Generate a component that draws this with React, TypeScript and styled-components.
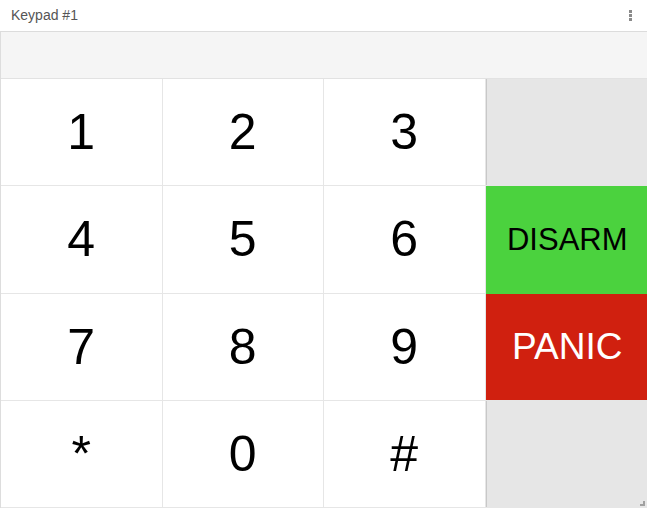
import styled, { createGlobalStyle } from "styled-components";

const GlobalStyle = createGlobalStyle`
    html, body {
        margin: 0;
        padding: 0;
        height: 100%;
        background: #ffffff;
        font-family: "Liberation Sans", Arial, sans-serif;
    }
    #root {
        height: 100%;
    }
`;

type Key = {
    label: string;
    kind: "digit" | "blank" | "disarm" | "panic";
};

const keys: Key[] = [
    { label: "1", kind: "digit" },
    { label: "2", kind: "digit" },
    { label: "3", kind: "digit" },
    { label: "", kind: "blank" },
    { label: "4", kind: "digit" },
    { label: "5", kind: "digit" },
    { label: "6", kind: "digit" },
    { label: "DISARM", kind: "disarm" },
    { label: "7", kind: "digit" },
    { label: "8", kind: "digit" },
    { label: "9", kind: "digit" },
    { label: "PANIC", kind: "panic" },
    { label: "*", kind: "digit" },
    { label: "0", kind: "digit" },
    { label: "#", kind: "digit" },
    { label: "", kind: "blank" },
];

const App = () => {
    return (
        <>
            <GlobalStyle />
            <Container>
                <Header>
                    <Title>Keypad #1</Title>
                    <MenuDots aria-label="menu">
                        <span />
                        <span />
                        <span />
                    </MenuDots>
                </Header>
                <Panel>
                    <Display />
                    <KeyGrid>
                        {keys.map((k, i) => (
                            <KeyButton key={i} $kind={k.kind}>
                                {k.label}
                            </KeyButton>
                        ))}
                    </KeyGrid>
                    <ResizeHandle />
                </Panel>
            </Container>
        </>
    );
};

const Container = styled.div`
    display: flex;
    flex-direction: column;
    width: 100%;
    height: 100vh;
`;

const Header = styled.div`
    display: flex;
    align-items: center;
    justify-content: space-between;
    height: 32px;
    padding: 0 15px 1px 11px;
    border-bottom: 1px solid #dcdcdc;
    box-sizing: border-box;
    flex: 0 0 auto;
`;

const Title = styled.div`
    font-size: 14px;
    color: #555555;
`;

const MenuDots = styled.div`
    display: flex;
    flex-direction: column;
    gap: 1px;
    span {
        display: block;
        width: 3px;
        height: 3px;
        background: #8a8a8a;
    }
`;

const Panel = styled.div`
    position: relative;
    display: flex;
    flex-direction: column;
    flex: 1 1 auto;
    border-left: 1px solid #dddddd;
    min-height: 0;
`;

const Display = styled.div`
    height: 47px;
    flex: 0 0 auto;
    background: #f5f5f5;
    border-bottom: 1px solid #e2e2e2;
    box-sizing: border-box;
`;

const KeyGrid = styled.div`
    display: grid;
    grid-template-columns: repeat(4, 1fr);
    grid-template-rows: repeat(4, 1fr);
    flex: 1 1 auto;
`;

const kindStyles = {
    digit: `
        background: #ffffff;
        color: #000000;
        font-size: 50px;
        border-right: 1px solid #e6e6e6;
        border-bottom: 1px solid #e6e6e6;
    `,
    blank: `
        background: #e6e6e6;
        border-bottom: 1px solid #e6e6e6;
        box-shadow: inset 1px 0 0 #c8c8c8;
    `,
    disarm: `
        background: #4bd23e;
        color: #000000;
        font-size: 31px;
        padding-left: 2px;
    `,
    panic: `
        background: #d0200f;
        color: #ffffff;
        font-size: 37px;
        padding-left: 2px;
        border-bottom: 1px solid #e6e6e6;
    `,
};

const KeyButton = styled.div<{ $kind: Key["kind"] }>`
    display: flex;
    align-items: center;
    justify-content: center;
    box-sizing: border-box;
    font-family: "Liberation Sans", Arial, sans-serif;
    user-select: none;
    cursor: pointer;
    ${({ $kind }) => kindStyles[$kind]}
`;

const ResizeHandle = styled.div`
    position: absolute;
    right: 2px;
    bottom: 2px;
    width: 5px;
    height: 5px;
    border-right: 2px solid #a0a0a0;
    border-bottom: 2px solid #a0a0a0;
    box-sizing: border-box;
`;

export default App;
